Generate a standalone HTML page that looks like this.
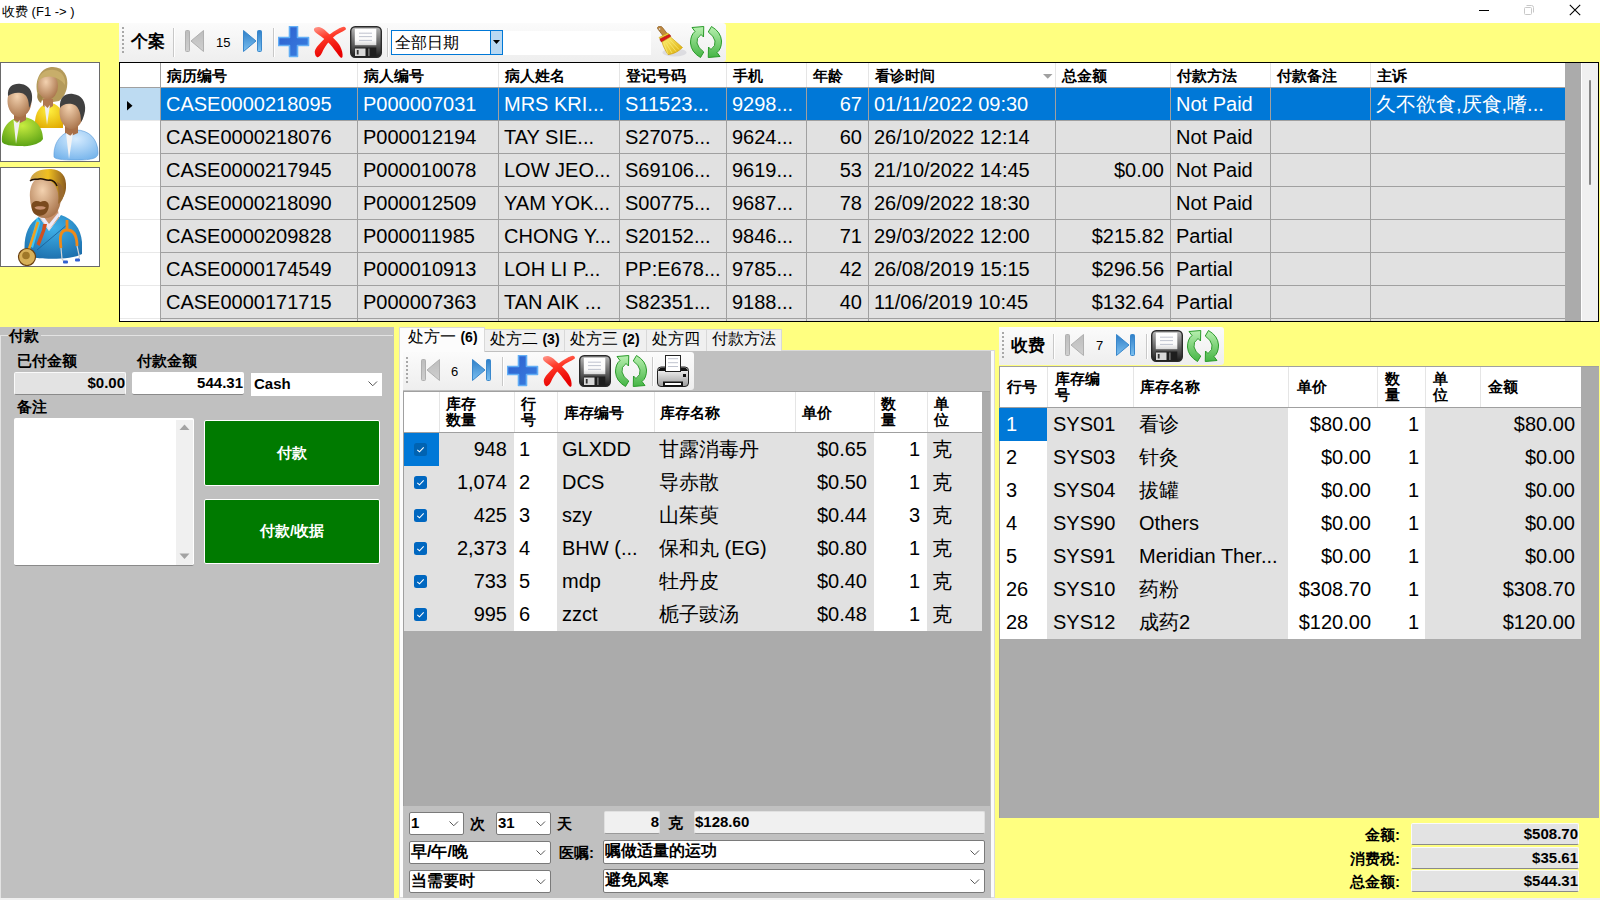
<!DOCTYPE html><html><head><meta charset="utf-8"><title>收费</title><style>
html,body{margin:0;padding:0}
body{width:1600px;height:900px;position:relative;overflow:hidden;background:#ffff80;font-family:'Liberation Sans', sans-serif;}
body div{position:absolute;box-sizing:border-box}
.t{white-space:nowrap;line-height:1}
.cell{white-space:nowrap;overflow:hidden;font-size:20px;line-height:33px;padding:0 5px;}
.r{text-align:right;padding-right:6px}
.hd{white-space:nowrap;font-size:15px;font-weight:bold;line-height:16px}
</style></head><body>

<svg width="0" height="0" style="position:absolute">
<defs>
<linearGradient id="gBlue" x1="0" y1="0" x2="0" y2="1"><stop offset="0" stop-color="#2f7fc8"/><stop offset="1" stop-color="#7cc0f0"/></linearGradient>
<linearGradient id="gGray" x1="0" y1="0" x2="0" y2="1"><stop offset="0" stop-color="#bdbdbd"/><stop offset="1" stop-color="#cfcfcf"/></linearGradient>
<linearGradient id="gPlus" x1="0" y1="0" x2="1" y2="1"><stop offset="0" stop-color="#2c5fce"/><stop offset="1" stop-color="#3a7fe0"/></linearGradient>
<linearGradient id="gRed" x1="0" y1="0" x2="0.3" y2="1"><stop offset="0" stop-color="#ff9c90"/><stop offset="0.4" stop-color="#ff3a28"/><stop offset="1" stop-color="#e80000"/></linearGradient>
<linearGradient id="gFlop" x1="0" y1="0" x2="0" y2="1"><stop offset="0" stop-color="#b8b8b8"/><stop offset="0.5" stop-color="#6a6a6a"/><stop offset="1" stop-color="#1a1a1a"/></linearGradient>
<linearGradient id="gLabel" x1="0" y1="0" x2="0" y2="1"><stop offset="0" stop-color="#ffffff"/><stop offset="0.7" stop-color="#fafafa"/><stop offset="1" stop-color="#d8d8d8"/></linearGradient>
<linearGradient id="gGreen" x1="0" y1="0" x2="0" y2="1"><stop offset="0" stop-color="#b8f0b0"/><stop offset="1" stop-color="#45b545"/></linearGradient>
<linearGradient id="gGreen2" x1="0" y1="0" x2="0" y2="1"><stop offset="0" stop-color="#45b545"/><stop offset="1" stop-color="#b8f0b0"/></linearGradient>
<linearGradient id="gTb" x1="0" y1="0" x2="0" y2="1"><stop offset="0" stop-color="#fbfbfb"/><stop offset="1" stop-color="#ececec"/></linearGradient>
<linearGradient id="gPrn" x1="0" y1="0" x2="0" y2="1"><stop offset="0" stop-color="#ffffff"/><stop offset="1" stop-color="#9a9a9a"/></linearGradient>
<linearGradient id="gBroom" x1="0" y1="0" x2="1" y2="1"><stop offset="0" stop-color="#fff27a"/><stop offset="1" stop-color="#d9a800"/></linearGradient>
<radialGradient id="gSkin" cx="0.4" cy="0.35" r="0.7"><stop offset="0" stop-color="#f3d2b0"/><stop offset="1" stop-color="#a8734a"/></radialGradient>
<radialGradient id="gGreenB" cx="0.5" cy="0.3" r="0.8"><stop offset="0" stop-color="#c8ec40"/><stop offset="1" stop-color="#4f9a10"/></radialGradient>
<radialGradient id="gYellowB" cx="0.5" cy="0.3" r="0.8"><stop offset="0" stop-color="#fff040"/><stop offset="1" stop-color="#e0a800"/></radialGradient>
<radialGradient id="gBlueB" cx="0.5" cy="0.3" r="0.8"><stop offset="0" stop-color="#d6ecff"/><stop offset="1" stop-color="#6fb0ea"/></radialGradient>
<radialGradient id="gCoat" cx="0.5" cy="0.3" r="0.8"><stop offset="0" stop-color="#3fb0e8"/><stop offset="1" stop-color="#1a6aa8"/></radialGradient>
<linearGradient id="gHair" x1="0" y1="0" x2="1" y2="0"><stop offset="0" stop-color="#c8a050"/><stop offset="0.5" stop-color="#f0c020"/><stop offset="1" stop-color="#8a5a20"/></linearGradient>
</defs></svg>

<div style="left:0px;top:0px;width:1600px;height:23px;background:#fff"></div>
<div class="t" style="left:2px;top:4px;font-size:13px;font-weight:normal;color:#000;line-height:15px">收费 (F1 -&gt; )</div>
<div style="left:1479px;top:10px;width:10px;height:1px;background:#000"></div>
<svg style="position:absolute;left:1523px;top:4px" width="12" height="12" viewBox="0 0 12 12"><rect x="1.5" y="3.5" width="7" height="7" rx="1" fill="none" stroke="#c8c8c8"/><path d="M3.5 1.5 h5 a2 2 0 0 1 2 2 v5" fill="none" stroke="#c8c8c8"/></svg>
<svg style="position:absolute;left:1569px;top:4px" width="12" height="12" viewBox="0 0 12 12"><path d="M0.8 0.8 L11.2 11.2 M11.2 0.8 L0.8 11.2" stroke="#000" stroke-width="1.1"/></svg>
<div style="left:0px;top:898px;width:1600px;height:2px;background:#f0f0f0"></div>
<div style="left:119px;top:23px;width:607px;height:39px;background:linear-gradient(#fbfbfb,#eeeeee);border-radius:0 3px 3px 0"></div>
<div style="left:122px;top:27px;width:2px;height:2px;background:#a8a8a8"></div><div style="left:122px;top:31px;width:2px;height:2px;background:#a8a8a8"></div><div style="left:122px;top:35px;width:2px;height:2px;background:#a8a8a8"></div><div style="left:122px;top:39px;width:2px;height:2px;background:#a8a8a8"></div><div style="left:122px;top:43px;width:2px;height:2px;background:#a8a8a8"></div><div style="left:122px;top:47px;width:2px;height:2px;background:#a8a8a8"></div><div style="left:122px;top:51px;width:2px;height:2px;background:#a8a8a8"></div>
<div class="t" style="left:131px;top:33px;font-size:17px;font-weight:bold;color:#000;line-height:17px">个案</div>
<div style="left:173px;top:28px;width:1px;height:29px;background:#c8c8c8;box-shadow:1px 0 0 #fff"></div>
<svg style="position:absolute;left:185px;top:30px" width="20" height="23" viewBox="0 0 20 23"><rect x="0.5" y="0.5" width="4" height="21" rx="1" fill="url(#gGray)" stroke="#b0b0b0"/><path d="M18.5 0.5 L18.5 21.5 L6 11 Z" fill="url(#gGray)" stroke="#b0b0b0" stroke-linejoin="round"/></svg>
<div class="t" style="left:216px;top:37px;font-size:13px;font-weight:normal;color:#000;line-height:12px">15</div>
<svg style="position:absolute;left:243px;top:30px" width="20" height="23" viewBox="0 0 20 23"><path d="M0.5 0.5 L0.5 21.5 L13 11 Z" fill="url(#gBlue)" stroke="#3a88cc" stroke-linejoin="round"/><rect x="14.5" y="0.5" width="4" height="21" rx="1" fill="url(#gBlue)" stroke="#3a88cc"/></svg>
<div style="left:273px;top:28px;width:1px;height:29px;background:#c8c8c8;box-shadow:1px 0 0 #fff"></div>
<svg style="position:absolute;left:278px;top:26px" width="32" height="32" viewBox="0 0 32 32"><path d="M11.5 0.5 h8 v11 h11 v8 h-11 v11 h-8 v-11 h-11 v-8 h11 z" fill="url(#gPlus)" stroke="#62aef6" stroke-width="1.6" stroke-linejoin="round"/></svg>
<svg style="position:absolute;left:313px;top:25px" width="34" height="34" viewBox="-1 0 34 34"><path d="M-0.1 4 C0.5 2 4 1.5 6 2.2 C9 3 12 6 15.4 9.2 C19 12.5 24 17 26 21 C28 25 29 29 28.5 31.7 C28 33 27 33 26.6 32.6 C25 31 21 25 16.3 19.5 C13 16 8 12 3.2 8.7 C1.5 7.5 -0.3 6 -0.1 4 Z" fill="url(#gRed)"/><path d="M31.3 2.6 C32 3.2 32 4 31.8 4.5 C28 7 25 8 22 10.1 C19 12.5 17 14.5 14.9 16.7 C12 20 10 23.5 8.8 26 C8 28 7 30 6 30.8 C5 32 4 32.5 3.2 32.2 C2 31.5 1.3 30.5 1.3 29.8 C0.8 28 0.7 27 0.85 26 C1.5 24 2.5 22 4.1 20.4 C6 18 8 16 10.2 13.9 C12.5 11.5 15 9.8 17.3 8.3 C20 6.5 23 4.5 25.7 3.1 C27 2.4 29 1.5 29.9 1.7 C30.5 1.8 31 2.2 31.3 2.6 Z" fill="url(#gRed)"/></svg>
<svg style="position:absolute;left:350px;top:26px" width="32" height="32" viewBox="0 0 32 32"><rect x="0.7" y="0.7" width="30.6" height="30.6" rx="4.5" fill="url(#gFlop)" stroke="#2a2a2a" stroke-width="1.4"/><rect x="4.8" y="2.7" width="21.5" height="16.5" fill="url(#gLabel)"/><path d="M9 7.2 h13 M9 10.6 h13 M9 14.4 h13" stroke="#b8bcc8" stroke-width="0.9"/><rect x="4.8" y="21.5" width="21.5" height="9" fill="#1e1e1e"/><rect x="5" y="22.5" width="10.5" height="7.5" fill="#d8d8d8"/><rect x="6.8" y="24" width="1.8" height="4.5" fill="#333"/><rect x="18.3" y="22.5" width="1.2" height="7.5" fill="#888"/></svg>
<div style="left:387px;top:28px;width:1px;height:29px;background:#c8c8c8;box-shadow:1px 0 0 #fff"></div>
<div style="left:391px;top:30px;width:112px;height:25px;background:#fff;border:1px solid #0078d7"></div>
<div style="left:490px;top:31px;width:12px;height:23px;background:#b8d8f2;border-left:1px solid #0078d7"></div>
<svg style="position:absolute;left:493px;top:40px" width="7" height="5" viewBox="0 0 7 5"><path d="M0 0 L7 0 L3.5 4 Z" fill="#000"/></svg>
<div class="t" style="left:395px;top:35px;font-size:16px;font-weight:normal;color:#000;line-height:16px">全部日期</div>
<div style="left:503px;top:31px;width:148px;height:24px;background:#fff"></div>
<svg style="position:absolute;left:656px;top:26px" width="32" height="32" viewBox="0 0 32 32"><ellipse cx="18.5" cy="26.5" rx="12" ry="4" fill="#c4c4cc" opacity="0.45"/><path d="M1.5 2.5 C1 0 5 -0.5 6.5 1.5 L11.5 8 L7.5 10.5 Z" fill="#c08a40" stroke="#8a5a20" stroke-width="0.7"/><circle cx="3.7" cy="3" r="1.1" fill="#fff" stroke="#8a5a20" stroke-width="0.5"/><path d="M3 11.5 L12 7 L13 8.5 L4 13 Z" fill="#f0d040" stroke="#c8a000" stroke-width="0.5"/><path d="M4 13 L13 8.5 C14.5 8.5 15 10.5 14.5 11 L6 16 C5 16 4 14.5 4 13 Z" fill="#d81818" stroke="#901010" stroke-width="0.5"/><path d="M6 16 L14.5 11 L26.5 21.5 C22 26 16 28.5 12 28.5 C9 24 7 20 6 16 Z" fill="url(#gBroom)" stroke="#c89800" stroke-width="0.6"/><path d="M8 18 L12 28 M10 17 L16 27 M12 15.5 L20 25.5 M14 14 L23 23.5" stroke="#f8e870" stroke-width="0.8"/></svg>
<svg style="position:absolute;left:690px;top:26px" width="32" height="32" viewBox="0 0 32 32"><path d="M2 1.5 L13.75 0.5 L13.5 11 L11 8.5 Q6 12 7 17 Q8 22 13.75 26 L10.5 31.5 Q1 26 0.5 17 Q0.5 9 5 5.5 Z" fill="url(#gGreen)" stroke="#2a9a2a" stroke-width="1" stroke-linejoin="round"/><path d="M2 1.5 L13.75 0.5 L13.5 11 L11 8.5 Q6 12 7 17 Q8 22 13.75 26 L10.5 31.5 Q1 26 0.5 17 Q0.5 9 5 5.5 Z" transform="rotate(180 16 16)" fill="url(#gGreen2)" stroke="#2a9a2a" stroke-width="1" stroke-linejoin="round"/></svg>
<div style="left:0px;top:62px;width:100px;height:100px;background:#fff;border:1px solid #6a6a6a"></div>
<div style="left:0px;top:167px;width:100px;height:100px;background:#fff;border:1px solid #6a6a6a"></div>
<svg style="position:absolute;left:1px;top:63px" width="98" height="98" viewBox="0 0 98 98">
<g>
 <path d="M39 36 C33 28 34 8 48 4.5 C61 2 68 12 66 24 C65 30 62 35 58 38 L46 40 Z" fill="#b49a5a"/>
 <path d="M37 30 C35 34 37 38 40 40 L42 34 Z" fill="#a08448"/>
 <path d="M34 63 C33 49 40 41 48 40 C56 40 62 46 62 56 L62 65 L36 65 Z" fill="url(#gYellowB)"/>
 <path d="M42 36 L52 36 L52 43 L47 46 L42 43 Z" fill="#b07850"/>
 <path d="M43.5 42 L46 62 L49 42 L46.5 45 Z" fill="#f0f0f0"/>
 <ellipse cx="47" cy="23" rx="10" ry="13.5" fill="url(#gSkin)"/>
 <path d="M37 20 C37 10 46 6 53 7 C61 8 65 14 64 22 C60 16 52 12 44 14 C40 15 38 17 37 20 Z" fill="#c8ae6a"/>
</g>
<g>
 <path d="M1 79 C0 64 9 55 20 54 C32 54 42 62 42 76 C40 80 30 84 20 83 C10 83 3 82 1 79 Z" fill="url(#gGreenB)"/>
 <path d="M13 48 L25 48 L25 57 L19 60 L13 57 Z" fill="#a87048"/>
 <path d="M12.5 57 L15 81 L19 57 L16 60 Z" fill="#f0f0f0"/>
 <ellipse cx="18.5" cy="38" rx="12" ry="16" fill="url(#gSkin)"/>
 <path d="M7 33 C6 23 13 20 20 21 C28 22 32 28 31 37 C30 41 29 43 28 45 C28 37 26 31 20 30 C14 29 10 31 7 33 Z" fill="#404040"/>
</g>
<g>
 <path d="M53 94 C52 78 62 68 75 67 C88 67 97 76 97 90 C97 95 92 97 75 97 C60 97 54 96 53 94 Z" fill="url(#gBlueB)" stroke="#5a9ad8" stroke-width="0.6"/>
 <path d="M64 60 L77 60 L77 70 L70 73 L64 70 Z" fill="#a87048"/>
 <path d="M65 70 L68 96 L72 70 L69 73 Z" fill="#f4f4f4"/>
 <ellipse cx="70.5" cy="49" rx="12" ry="17" fill="url(#gSkin)"/>
 <path d="M59 45 C58 34 65 30 72 31 C81 32 85 39 84 48 C83 53 82 56 80 59 C80 49 77 42 71 41 C65 40 61 42 59 45 Z" fill="#404040"/>
</g></svg>
<svg style="position:absolute;left:1px;top:168px" width="98" height="98" viewBox="0 0 98 98">
 <path d="M24 88 C22 70 26 56 38 49 L48 63 L60 47 C72 51 80 60 81 74 L81 86 C70 92 40 92 24 88 Z" fill="url(#gCoat)"/>
 <path d="M67 56 L36 82" stroke="#1a5a90" stroke-width="0.8"/>
 <path d="M36 49 L39.5 54 L32 80 L28.5 78 Z" fill="#40d0ff" opacity="0.85"/>
 <path d="M38 44 L57 42 L58 50 L48 62 L39 50 Z" fill="#c8906a"/>
 <path d="M38 48 L48 62 L59 47 L57 45 L48 56 L40 45 Z" fill="#eceaf8"/>
 <path d="M42 56 L46 56 L44.5 62 L38.5 78 L35.5 76 L41 62 Z" fill="#d05020"/>
 <path d="M29 30 C28 14 36 7 46 7.5 C56 8 61 16 60 30 C59.5 42 54 50 44 50 C34 50 29.5 42 29 30 Z" fill="url(#gSkin)"/>
 <path d="M29 13 C30 4 40 0.5 50 1 C60 1.5 66 8 65 20 C64.5 26 62 31 58 34 C58 26 56 19 52 15 C46 10 38 11 29 13 Z" fill="url(#gHair)"/>
 <path d="M56 14 C62 16 64 24 62 30 C61 33 59 35 57 36 C58 28 58 20 56 14 Z" fill="#9a6a30"/>
 <path d="M29 13 C32 10 35 12 38 11 C42 10 45 13 49 12 C52 12 55 15 56 18" fill="none" stroke="#201008" stroke-width="1.5"/>
 <path d="M30.5 38 C30.5 33 36 32 39.5 34 C43 32 48 33 47.8 38 C47.5 44 43.5 47.8 39 47.8 C34 47.8 30.5 44 30.5 38 Z" fill="#7a4a1e"/>
 <path d="M33.5 39.5 C35 37.8 43 37.8 44.8 39.5 C43.5 42.5 35 42.5 33.5 39.5 Z" fill="#c89070"/>
 <path d="M66 52 L66 62 M66 62 C58 62 59 72 60 80 M66 62 C74 62 76 70 76 78" fill="none" stroke="#f08a18" stroke-width="2.8"/>
 <path d="M60 80 L61 91 L63.5 94 M76 78 L78.5 89 L76.5 92" fill="none" stroke="#d4d4d4" stroke-width="1.2"/>
 <rect x="62" y="92.5" width="5" height="3" rx="1" fill="#3060d0"/><rect x="74" y="90.5" width="5" height="3" rx="1" fill="#3060d0"/>
 <path d="M37 54 L28 81" stroke="#f0a020" stroke-width="2.5"/>
 <circle cx="26" cy="89" r="8.5" fill="#d8b058" stroke="#6a4010" stroke-width="1.2"/>
 <circle cx="25" cy="87.5" r="3.8" fill="#a07828"/>
</svg>
<div style="left:119px;top:62px;width:1480px;height:260px;background:#ababab;border:1px solid #000"></div>
<div style="left:120px;top:63px;width:1445px;height:24px;background:#fff"></div>
<div style="left:120px;top:87px;width:1445px;height:1px;background:#a0a0a0"></div>
<div style="left:160px;top:63px;width:1px;height:24px;background:#a0a0a0"></div>
<div style="left:357px;top:63px;width:1px;height:24px;background:#e5e5e5"></div>
<div style="left:498px;top:63px;width:1px;height:24px;background:#e5e5e5"></div>
<div style="left:619px;top:63px;width:1px;height:24px;background:#e5e5e5"></div>
<div style="left:726px;top:63px;width:1px;height:24px;background:#e5e5e5"></div>
<div style="left:806px;top:63px;width:1px;height:24px;background:#e5e5e5"></div>
<div style="left:868px;top:63px;width:1px;height:24px;background:#e5e5e5"></div>
<div style="left:1055px;top:63px;width:1px;height:24px;background:#e5e5e5"></div>
<div style="left:1170px;top:63px;width:1px;height:24px;background:#e5e5e5"></div>
<div style="left:1270px;top:63px;width:1px;height:24px;background:#e5e5e5"></div>
<div style="left:1370px;top:63px;width:1px;height:24px;background:#e5e5e5"></div>
<div class="hd" style="left:167px;top:68px">病历编号</div>
<div class="hd" style="left:364px;top:68px">病人编号</div>
<div class="hd" style="left:505px;top:68px">病人姓名</div>
<div class="hd" style="left:626px;top:68px">登记号码</div>
<div class="hd" style="left:733px;top:68px">手机</div>
<div class="hd" style="left:813px;top:68px">年龄</div>
<div class="hd" style="left:875px;top:68px">看诊时间</div>
<div class="hd" style="left:1062px;top:68px">总金额</div>
<div class="hd" style="left:1177px;top:68px">付款方法</div>
<div class="hd" style="left:1277px;top:68px">付款备注</div>
<div class="hd" style="left:1377px;top:68px">主诉</div>
<svg style="position:absolute;left:1043px;top:74px" width="10" height="5" viewBox="0 0 10 5"><path d="M0 0 L9.5 0 L4.75 4.8 Z" fill="#a0a0a0"/></svg>
<div style="left:120px;top:88px;width:40px;height:233px;background:#fff"></div>
<div style="left:161px;top:88px;width:1404px;height:233px;background:#e1e1e1"></div>
<div style="left:161px;top:120px;width:1404px;height:1px;background:#a0a0a0"></div>
<div style="left:120px;top:120px;width:40px;height:1px;background:#e8e8e8"></div>
<div style="left:161px;top:153px;width:1404px;height:1px;background:#a0a0a0"></div>
<div style="left:120px;top:153px;width:40px;height:1px;background:#e8e8e8"></div>
<div style="left:161px;top:186px;width:1404px;height:1px;background:#a0a0a0"></div>
<div style="left:120px;top:186px;width:40px;height:1px;background:#e8e8e8"></div>
<div style="left:161px;top:219px;width:1404px;height:1px;background:#a0a0a0"></div>
<div style="left:120px;top:219px;width:40px;height:1px;background:#e8e8e8"></div>
<div style="left:161px;top:252px;width:1404px;height:1px;background:#a0a0a0"></div>
<div style="left:120px;top:252px;width:40px;height:1px;background:#e8e8e8"></div>
<div style="left:161px;top:285px;width:1404px;height:1px;background:#a0a0a0"></div>
<div style="left:120px;top:285px;width:40px;height:1px;background:#e8e8e8"></div>
<div style="left:161px;top:318px;width:1404px;height:1px;background:#a0a0a0"></div>
<div style="left:120px;top:318px;width:40px;height:1px;background:#e8e8e8"></div>
<div style="left:160px;top:88px;width:1px;height:233px;background:#a0a0a0"></div>
<div style="left:357px;top:88px;width:1px;height:233px;background:#a0a0a0"></div>
<div style="left:498px;top:88px;width:1px;height:233px;background:#a0a0a0"></div>
<div style="left:619px;top:88px;width:1px;height:233px;background:#a0a0a0"></div>
<div style="left:726px;top:88px;width:1px;height:233px;background:#a0a0a0"></div>
<div style="left:806px;top:88px;width:1px;height:233px;background:#a0a0a0"></div>
<div style="left:868px;top:88px;width:1px;height:233px;background:#a0a0a0"></div>
<div style="left:1055px;top:88px;width:1px;height:233px;background:#a0a0a0"></div>
<div style="left:1170px;top:88px;width:1px;height:233px;background:#a0a0a0"></div>
<div style="left:1270px;top:88px;width:1px;height:233px;background:#a0a0a0"></div>
<div style="left:1370px;top:88px;width:1px;height:233px;background:#a0a0a0"></div>
<div style="left:120px;top:88px;width:40px;height:32px;background:#bddbf2"></div>
<div style="left:161px;top:88px;width:1404px;height:32px;background:#0078d7"></div>
<div style="left:357px;top:88px;width:1px;height:32px;background:#a0a0a0"></div>
<div style="left:498px;top:88px;width:1px;height:32px;background:#a0a0a0"></div>
<div style="left:619px;top:88px;width:1px;height:32px;background:#a0a0a0"></div>
<div style="left:726px;top:88px;width:1px;height:32px;background:#a0a0a0"></div>
<div style="left:806px;top:88px;width:1px;height:32px;background:#a0a0a0"></div>
<div style="left:868px;top:88px;width:1px;height:32px;background:#a0a0a0"></div>
<div style="left:1055px;top:88px;width:1px;height:32px;background:#a0a0a0"></div>
<div style="left:1170px;top:88px;width:1px;height:32px;background:#a0a0a0"></div>
<div style="left:1270px;top:88px;width:1px;height:32px;background:#a0a0a0"></div>
<div style="left:1370px;top:88px;width:1px;height:32px;background:#a0a0a0"></div>
<svg style="position:absolute;left:127px;top:101px" width="6" height="10" viewBox="0 0 6 10"><path d="M0 0 L5.5 4.75 L0 9.5 Z" fill="#000"/></svg>
<div class="cell" style="left:161px;top:88px;width:196px;height:32px;color:#fff">CASE0000218095</div>
<div class="cell" style="left:358px;top:88px;width:140px;height:32px;color:#fff">P000007031</div>
<div class="cell" style="left:499px;top:88px;width:120px;height:32px;color:#fff">MRS KRI...</div>
<div class="cell" style="left:620px;top:88px;width:106px;height:32px;color:#fff">S11523...</div>
<div class="cell" style="left:727px;top:88px;width:79px;height:32px;color:#fff">9298...</div>
<div class="cell r" style="left:807px;top:88px;width:61px;height:32px;color:#fff">67</div>
<div class="cell" style="left:869px;top:88px;width:186px;height:32px;color:#fff">01/11/2022 09:30</div>
<div class="cell" style="left:1171px;top:88px;width:99px;height:32px;color:#fff">Not Paid</div>
<div class="cell" style="left:1371px;top:88px;width:194px;height:32px;color:#fff">久不欲食,厌食,嗜...</div>
<div class="cell" style="left:161px;top:121px;width:196px;height:32px;color:#000">CASE0000218076</div>
<div class="cell" style="left:358px;top:121px;width:140px;height:32px;color:#000">P000012194</div>
<div class="cell" style="left:499px;top:121px;width:120px;height:32px;color:#000">TAY SIE...</div>
<div class="cell" style="left:620px;top:121px;width:106px;height:32px;color:#000">S27075...</div>
<div class="cell" style="left:727px;top:121px;width:79px;height:32px;color:#000">9624...</div>
<div class="cell r" style="left:807px;top:121px;width:61px;height:32px;color:#000">60</div>
<div class="cell" style="left:869px;top:121px;width:186px;height:32px;color:#000">26/10/2022 12:14</div>
<div class="cell" style="left:1171px;top:121px;width:99px;height:32px;color:#000">Not Paid</div>
<div class="cell" style="left:161px;top:154px;width:196px;height:32px;color:#000">CASE0000217945</div>
<div class="cell" style="left:358px;top:154px;width:140px;height:32px;color:#000">P000010078</div>
<div class="cell" style="left:499px;top:154px;width:120px;height:32px;color:#000">LOW JEO...</div>
<div class="cell" style="left:620px;top:154px;width:106px;height:32px;color:#000">S69106...</div>
<div class="cell" style="left:727px;top:154px;width:79px;height:32px;color:#000">9619...</div>
<div class="cell r" style="left:807px;top:154px;width:61px;height:32px;color:#000">53</div>
<div class="cell" style="left:869px;top:154px;width:186px;height:32px;color:#000">21/10/2022 14:45</div>
<div class="cell r" style="left:1056px;top:154px;width:114px;height:32px;color:#000">$0.00</div>
<div class="cell" style="left:1171px;top:154px;width:99px;height:32px;color:#000">Not Paid</div>
<div class="cell" style="left:161px;top:187px;width:196px;height:32px;color:#000">CASE0000218090</div>
<div class="cell" style="left:358px;top:187px;width:140px;height:32px;color:#000">P000012509</div>
<div class="cell" style="left:499px;top:187px;width:120px;height:32px;color:#000">YAM YOK...</div>
<div class="cell" style="left:620px;top:187px;width:106px;height:32px;color:#000">S00775...</div>
<div class="cell" style="left:727px;top:187px;width:79px;height:32px;color:#000">9687...</div>
<div class="cell r" style="left:807px;top:187px;width:61px;height:32px;color:#000">78</div>
<div class="cell" style="left:869px;top:187px;width:186px;height:32px;color:#000">26/09/2022 18:30</div>
<div class="cell" style="left:1171px;top:187px;width:99px;height:32px;color:#000">Not Paid</div>
<div class="cell" style="left:161px;top:220px;width:196px;height:32px;color:#000">CASE0000209828</div>
<div class="cell" style="left:358px;top:220px;width:140px;height:32px;color:#000">P000011985</div>
<div class="cell" style="left:499px;top:220px;width:120px;height:32px;color:#000">CHONG Y...</div>
<div class="cell" style="left:620px;top:220px;width:106px;height:32px;color:#000">S20152...</div>
<div class="cell" style="left:727px;top:220px;width:79px;height:32px;color:#000">9846...</div>
<div class="cell r" style="left:807px;top:220px;width:61px;height:32px;color:#000">71</div>
<div class="cell" style="left:869px;top:220px;width:186px;height:32px;color:#000">29/03/2022 12:00</div>
<div class="cell r" style="left:1056px;top:220px;width:114px;height:32px;color:#000">$215.82</div>
<div class="cell" style="left:1171px;top:220px;width:99px;height:32px;color:#000">Partial</div>
<div class="cell" style="left:161px;top:253px;width:196px;height:32px;color:#000">CASE0000174549</div>
<div class="cell" style="left:358px;top:253px;width:140px;height:32px;color:#000">P000010913</div>
<div class="cell" style="left:499px;top:253px;width:120px;height:32px;color:#000">LOH LI P...</div>
<div class="cell" style="left:620px;top:253px;width:106px;height:32px;color:#000">PP:E678...</div>
<div class="cell" style="left:727px;top:253px;width:79px;height:32px;color:#000">9785...</div>
<div class="cell r" style="left:807px;top:253px;width:61px;height:32px;color:#000">42</div>
<div class="cell" style="left:869px;top:253px;width:186px;height:32px;color:#000">26/08/2019 15:15</div>
<div class="cell r" style="left:1056px;top:253px;width:114px;height:32px;color:#000">$296.56</div>
<div class="cell" style="left:1171px;top:253px;width:99px;height:32px;color:#000">Partial</div>
<div class="cell" style="left:161px;top:286px;width:196px;height:32px;color:#000">CASE0000171715</div>
<div class="cell" style="left:358px;top:286px;width:140px;height:32px;color:#000">P000007363</div>
<div class="cell" style="left:499px;top:286px;width:120px;height:32px;color:#000">TAN AIK ...</div>
<div class="cell" style="left:620px;top:286px;width:106px;height:32px;color:#000">S82351...</div>
<div class="cell" style="left:727px;top:286px;width:79px;height:32px;color:#000">9188...</div>
<div class="cell r" style="left:807px;top:286px;width:61px;height:32px;color:#000">40</div>
<div class="cell" style="left:869px;top:286px;width:186px;height:32px;color:#000">11/06/2019 10:45</div>
<div class="cell r" style="left:1056px;top:286px;width:114px;height:32px;color:#000">$132.64</div>
<div class="cell" style="left:1171px;top:286px;width:99px;height:32px;color:#000">Partial</div>
<div style="left:1581px;top:63px;width:17px;height:258px;background:#f0f0f0"></div>
<div style="left:1589px;top:80px;width:2px;height:105px;background:#858585;border-radius:1px"></div>
<div style="left:1581px;top:63px;width:1px;height:258px;background:#fff"></div>
<div style="left:0px;top:327px;width:394px;height:571px;background:#c0c0c0"></div>
<div style="left:0px;top:335px;width:8px;height:1px;background:#e3e3e3"></div>
<div style="left:41px;top:335px;width:352px;height:1px;background:#e3e3e3"></div>
<div style="left:0px;top:335px;width:1px;height:563px;background:#e3e3e3"></div>
<div class="hd" style="left:9px;top:328px">付款</div>
<div class="hd" style="left:17px;top:353px">已付金额</div>
<div class="hd" style="left:137px;top:353px">付款金额</div>
<div style="left:14px;top:372px;width:112px;height:23px;background:#e3e3e3;border:1px solid #fafafa;border-bottom:1px solid #8a8a8a;border-radius:2px"></div>
<div class="t" style="left:14px;top:375px;width:111px;text-align:right;font-size:15px;font-weight:bold;line-height:16px">$0.00</div>
<div style="left:132px;top:372px;width:112px;height:23px;background:#fff;border-bottom:1px solid #8a8a8a;border-radius:2px"></div>
<div class="t" style="left:132px;top:375px;width:111px;text-align:right;font-size:15px;font-weight:bold;line-height:16px">544.31</div>
<div style="left:251px;top:373px;width:131px;height:23px;background:#fff"></div>
<div class="t" style="left:254px;top:376px;font-size:15px;font-weight:bold;line-height:16px">Cash</div>
<svg style="position:absolute;left:368px;top:381px" width="10" height="6" viewBox="0 0 10 6"><path d="M0.5 0.5 L4.75 4.75 L9 0.5" fill="none" stroke="#555" stroke-width="1"/></svg>
<div class="hd" style="left:17px;top:399px">备注</div>
<div style="left:14px;top:418px;width:180px;height:148px;background:#fff;border-bottom:1px solid #8a8a8a;border-radius:2px"></div>
<div style="left:176px;top:420px;width:17px;height:145px;background:#f0f0f0"></div>
<svg style="position:absolute;left:179px;top:424px" width="11" height="7" viewBox="0 0 11 7"><path d="M0.5 6 L5.5 0.5 L10.5 6 Z" fill="#a3a3a3"/></svg>
<svg style="position:absolute;left:179px;top:553px" width="11" height="7" viewBox="0 0 11 7"><path d="M0.5 0.5 L5.5 6 L10.5 0.5 Z" fill="#a3a3a3"/></svg>
<div style="left:204px;top:420px;width:176px;height:66px;background:#007a00;border:1.5px solid #fff;border-radius:2px"></div>
<div class="t" style="left:204px;top:445px;width:176px;text-align:center;font-size:15px;font-weight:bold;color:#fff;line-height:16px">付款</div>
<div style="left:204px;top:499px;width:176px;height:65px;background:#007a00;border:1.5px solid #fff;border-radius:2px"></div>
<div class="t" style="left:204px;top:523px;width:176px;text-align:center;font-size:15px;font-weight:bold;color:#fff;line-height:16px">付款/收据</div>
<div style="left:399px;top:350px;width:596px;height:548px;background:#fcfcfc;border:1px solid #dadada"></div>
<div style="left:403px;top:351px;width:588px;height:547px;background:#c0c0c0"></div>
<div style="left:484px;top:329px;width:81px;height:22px;background:#f0f0f0;border:1px solid #d9d9d9;border-bottom:none"></div>
<div class="hd" style="left:490px;top:331px;font-weight:normal;font-size:16px">处方二 <b style='font-size:14px'>(3)</b></div>
<div style="left:564px;top:329px;width:83px;height:22px;background:#f0f0f0;border:1px solid #d9d9d9;border-bottom:none"></div>
<div class="hd" style="left:570px;top:331px;font-weight:normal;font-size:16px">处方三 <b style='font-size:14px'>(2)</b></div>
<div style="left:646px;top:329px;width:61px;height:22px;background:#f0f0f0;border:1px solid #d9d9d9;border-bottom:none"></div>
<div class="hd" style="left:652px;top:331px;font-weight:normal;font-size:16px">处方四</div>
<div style="left:706px;top:329px;width:76px;height:22px;background:#f0f0f0;border:1px solid #d9d9d9;border-bottom:none"></div>
<div class="hd" style="left:712px;top:331px;font-weight:normal;font-size:16px">付款方法</div>
<div style="left:399px;top:327px;width:86px;height:25px;background:#fcfcfc;border:1px solid #d9d9d9;border-bottom:none"></div>
<div class="hd" style="left:408px;top:329px;font-weight:normal;font-size:16px">处方一 <b style="font-size:14px">(6)</b></div>
<div style="left:403px;top:352px;width:291px;height:38px;background:linear-gradient(#fbfbfb,#eeeeee);border-radius:0 3px 3px 0"></div>
<div style="left:406px;top:357px;width:2px;height:2px;background:#a8a8a8"></div><div style="left:406px;top:361px;width:2px;height:2px;background:#a8a8a8"></div><div style="left:406px;top:365px;width:2px;height:2px;background:#a8a8a8"></div><div style="left:406px;top:369px;width:2px;height:2px;background:#a8a8a8"></div><div style="left:406px;top:373px;width:2px;height:2px;background:#a8a8a8"></div><div style="left:406px;top:377px;width:2px;height:2px;background:#a8a8a8"></div><div style="left:406px;top:381px;width:2px;height:2px;background:#a8a8a8"></div>
<svg style="position:absolute;left:421px;top:359px" width="20" height="23" viewBox="0 0 20 23"><rect x="0.5" y="0.5" width="4" height="21" rx="1" fill="url(#gGray)" stroke="#b0b0b0"/><path d="M18.5 0.5 L18.5 21.5 L6 11 Z" fill="url(#gGray)" stroke="#b0b0b0" stroke-linejoin="round"/></svg>
<div class="t" style="left:451px;top:366px;font-size:13px;font-weight:normal;color:#000;line-height:12px">6</div>
<svg style="position:absolute;left:472px;top:359px" width="20" height="23" viewBox="0 0 20 23"><path d="M0.5 0.5 L0.5 21.5 L13 11 Z" fill="url(#gBlue)" stroke="#3a88cc" stroke-linejoin="round"/><rect x="14.5" y="0.5" width="4" height="21" rx="1" fill="url(#gBlue)" stroke="#3a88cc"/></svg>
<div style="left:502px;top:357px;width:1px;height:29px;background:#c8c8c8;box-shadow:1px 0 0 #fff"></div>
<svg style="position:absolute;left:507px;top:355px" width="32" height="32" viewBox="0 0 32 32"><path d="M11.5 0.5 h8 v11 h11 v8 h-11 v11 h-8 v-11 h-11 v-8 h11 z" fill="url(#gPlus)" stroke="#62aef6" stroke-width="1.6" stroke-linejoin="round"/></svg>
<svg style="position:absolute;left:542px;top:354px" width="34" height="34" viewBox="-1 0 34 34"><path d="M-0.1 4 C0.5 2 4 1.5 6 2.2 C9 3 12 6 15.4 9.2 C19 12.5 24 17 26 21 C28 25 29 29 28.5 31.7 C28 33 27 33 26.6 32.6 C25 31 21 25 16.3 19.5 C13 16 8 12 3.2 8.7 C1.5 7.5 -0.3 6 -0.1 4 Z" fill="url(#gRed)"/><path d="M31.3 2.6 C32 3.2 32 4 31.8 4.5 C28 7 25 8 22 10.1 C19 12.5 17 14.5 14.9 16.7 C12 20 10 23.5 8.8 26 C8 28 7 30 6 30.8 C5 32 4 32.5 3.2 32.2 C2 31.5 1.3 30.5 1.3 29.8 C0.8 28 0.7 27 0.85 26 C1.5 24 2.5 22 4.1 20.4 C6 18 8 16 10.2 13.9 C12.5 11.5 15 9.8 17.3 8.3 C20 6.5 23 4.5 25.7 3.1 C27 2.4 29 1.5 29.9 1.7 C30.5 1.8 31 2.2 31.3 2.6 Z" fill="url(#gRed)"/></svg>
<svg style="position:absolute;left:579px;top:355px" width="32" height="32" viewBox="0 0 32 32"><rect x="0.7" y="0.7" width="30.6" height="30.6" rx="4.5" fill="url(#gFlop)" stroke="#2a2a2a" stroke-width="1.4"/><rect x="4.8" y="2.7" width="21.5" height="16.5" fill="url(#gLabel)"/><path d="M9 7.2 h13 M9 10.6 h13 M9 14.4 h13" stroke="#b8bcc8" stroke-width="0.9"/><rect x="4.8" y="21.5" width="21.5" height="9" fill="#1e1e1e"/><rect x="5" y="22.5" width="10.5" height="7.5" fill="#d8d8d8"/><rect x="6.8" y="24" width="1.8" height="4.5" fill="#333"/><rect x="18.3" y="22.5" width="1.2" height="7.5" fill="#888"/></svg>
<svg style="position:absolute;left:615px;top:355px" width="32" height="32" viewBox="0 0 32 32"><path d="M2 1.5 L13.75 0.5 L13.5 11 L11 8.5 Q6 12 7 17 Q8 22 13.75 26 L10.5 31.5 Q1 26 0.5 17 Q0.5 9 5 5.5 Z" fill="url(#gGreen)" stroke="#2a9a2a" stroke-width="1" stroke-linejoin="round"/><path d="M2 1.5 L13.75 0.5 L13.5 11 L11 8.5 Q6 12 7 17 Q8 22 13.75 26 L10.5 31.5 Q1 26 0.5 17 Q0.5 9 5 5.5 Z" transform="rotate(180 16 16)" fill="url(#gGreen2)" stroke="#2a9a2a" stroke-width="1" stroke-linejoin="round"/></svg>
<div style="left:652px;top:357px;width:1px;height:29px;background:#c8c8c8;box-shadow:1px 0 0 #fff"></div>
<svg style="position:absolute;left:657px;top:355px" width="32" height="32" viewBox="0 0 32 32"><rect x="8.5" y="0.5" width="15" height="16" fill="#fff" stroke="#222"/><path d="M11 3.7 h10 M11 7.7 h10 M11 11.5 h10" stroke="#b8bcc8" stroke-width="0.9"/><path d="M4 12 h24 a3.5 3.5 0 0 1 3.5 3.5 v12.5 a3.5 3.5 0 0 1 -3.5 3.5 h-24 a3.5 3.5 0 0 1 -3.5 -3.5 v-12.5 a3.5 3.5 0 0 1 3.5 -3.5 z" fill="url(#gPrn)" stroke="#222" stroke-width="1"/><path d="M1 16 Q2 12.5 5 12.5 h22 Q30 12.5 31 16 Z" fill="#111"/><rect x="8.5" y="0.5" width="15" height="16" fill="#fff" stroke="#222"/><path d="M11 3.7 h10 M11 7.7 h10 M11 11.5 h10" stroke="#b8bcc8" stroke-width="0.9"/><rect x="6" y="26.5" width="20" height="5" fill="#111"/><rect x="8" y="28" width="16" height="2" fill="#fff"/><rect x="26" y="19" width="3" height="3" fill="#111"/></svg>
<div style="left:403px;top:391px;width:587px;height:415px;background:#ababab;border-top:1px solid #a0a0a0;border-left:1px solid #a0a0a0"></div>
<div style="left:404px;top:392px;width:578px;height:40px;background:#fff"></div>
<div style="left:404px;top:432px;width:578px;height:1px;background:#a0a0a0"></div>
<div style="left:439px;top:392px;width:1px;height:40px;background:#e5e5e5"></div>
<div style="left:514px;top:392px;width:1px;height:40px;background:#e5e5e5"></div>
<div style="left:557px;top:392px;width:1px;height:40px;background:#e5e5e5"></div>
<div style="left:654px;top:392px;width:1px;height:40px;background:#e5e5e5"></div>
<div style="left:795px;top:392px;width:1px;height:40px;background:#e5e5e5"></div>
<div style="left:874px;top:392px;width:1px;height:40px;background:#e5e5e5"></div>
<div style="left:927px;top:392px;width:1px;height:40px;background:#e5e5e5"></div>
<div class="hd" style="left:446px;top:396px;line-height:16px">库存<br>数量</div>
<div class="hd" style="left:521px;top:396px;line-height:16px">行<br>号</div>
<div class="hd" style="left:564px;top:405px;line-height:16px">库存编号</div>
<div class="hd" style="left:660px;top:405px;line-height:16px">库存名称</div>
<div class="hd" style="left:802px;top:405px;line-height:16px">单价</div>
<div class="hd" style="left:881px;top:396px;line-height:16px">数<br>量</div>
<div class="hd" style="left:934px;top:396px;line-height:16px">单<br>位</div>
<div style="left:404px;top:433px;width:35px;height:198px;background:#e1e1e1"></div>
<div style="left:439px;top:433px;width:75px;height:198px;background:#e1e1e1"></div>
<div style="left:514px;top:433px;width:43px;height:198px;background:#fff"></div>
<div style="left:557px;top:433px;width:97px;height:198px;background:#e1e1e1"></div>
<div style="left:654px;top:433px;width:141px;height:198px;background:#e1e1e1"></div>
<div style="left:795px;top:433px;width:79px;height:198px;background:#e1e1e1"></div>
<div style="left:874px;top:433px;width:53px;height:198px;background:#fff"></div>
<div style="left:927px;top:433px;width:55px;height:198px;background:#e1e1e1"></div>
<div style="left:404px;top:433px;width:35px;height:33px;background:#0078d7"></div>
<svg style="position:absolute;left:414px;top:443px" width="13" height="13" viewBox="0 0 13 13"><rect x="0" y="0" width="13" height="13" rx="2.5" fill="#0063b1"/><path d="M3.3 6.8 L5.5 8.8 L9.7 4.3" fill="none" stroke="#fff" stroke-width="1.1"/></svg>
<div class="cell" style="left:439px;top:433px;width:75px;height:33px;text-align:right;padding-right:7px">948</div>
<div class="cell" style="left:514px;top:433px;width:43px;height:33px;padding-left:5px">1</div>
<div class="cell" style="left:557px;top:433px;width:97px;height:33px;padding-left:5px">GLXDD</div>
<div class="cell" style="left:654px;top:433px;width:141px;height:33px;padding-left:5px">甘露消毒丹</div>
<div class="cell" style="left:795px;top:433px;width:79px;height:33px;text-align:right;padding-right:7px">$0.65</div>
<div class="cell" style="left:874px;top:433px;width:53px;height:33px;text-align:right;padding-right:7px">1</div>
<div class="cell" style="left:927px;top:433px;width:55px;height:33px;padding-left:5px">克</div>
<svg style="position:absolute;left:414px;top:476px" width="13" height="13" viewBox="0 0 13 13"><rect x="0" y="0" width="13" height="13" rx="2.5" fill="#0067c0"/><path d="M3.3 6.8 L5.5 8.8 L9.7 4.3" fill="none" stroke="#fff" stroke-width="1.1"/></svg>
<div class="cell" style="left:439px;top:466px;width:75px;height:33px;text-align:right;padding-right:7px">1,074</div>
<div class="cell" style="left:514px;top:466px;width:43px;height:33px;padding-left:5px">2</div>
<div class="cell" style="left:557px;top:466px;width:97px;height:33px;padding-left:5px">DCS</div>
<div class="cell" style="left:654px;top:466px;width:141px;height:33px;padding-left:5px">导赤散</div>
<div class="cell" style="left:795px;top:466px;width:79px;height:33px;text-align:right;padding-right:7px">$0.50</div>
<div class="cell" style="left:874px;top:466px;width:53px;height:33px;text-align:right;padding-right:7px">1</div>
<div class="cell" style="left:927px;top:466px;width:55px;height:33px;padding-left:5px">克</div>
<svg style="position:absolute;left:414px;top:509px" width="13" height="13" viewBox="0 0 13 13"><rect x="0" y="0" width="13" height="13" rx="2.5" fill="#0067c0"/><path d="M3.3 6.8 L5.5 8.8 L9.7 4.3" fill="none" stroke="#fff" stroke-width="1.1"/></svg>
<div class="cell" style="left:439px;top:499px;width:75px;height:33px;text-align:right;padding-right:7px">425</div>
<div class="cell" style="left:514px;top:499px;width:43px;height:33px;padding-left:5px">3</div>
<div class="cell" style="left:557px;top:499px;width:97px;height:33px;padding-left:5px">szy</div>
<div class="cell" style="left:654px;top:499px;width:141px;height:33px;padding-left:5px">山茱萸</div>
<div class="cell" style="left:795px;top:499px;width:79px;height:33px;text-align:right;padding-right:7px">$0.44</div>
<div class="cell" style="left:874px;top:499px;width:53px;height:33px;text-align:right;padding-right:7px">3</div>
<div class="cell" style="left:927px;top:499px;width:55px;height:33px;padding-left:5px">克</div>
<svg style="position:absolute;left:414px;top:542px" width="13" height="13" viewBox="0 0 13 13"><rect x="0" y="0" width="13" height="13" rx="2.5" fill="#0067c0"/><path d="M3.3 6.8 L5.5 8.8 L9.7 4.3" fill="none" stroke="#fff" stroke-width="1.1"/></svg>
<div class="cell" style="left:439px;top:532px;width:75px;height:33px;text-align:right;padding-right:7px">2,373</div>
<div class="cell" style="left:514px;top:532px;width:43px;height:33px;padding-left:5px">4</div>
<div class="cell" style="left:557px;top:532px;width:97px;height:33px;padding-left:5px">BHW (...</div>
<div class="cell" style="left:654px;top:532px;width:141px;height:33px;padding-left:5px">保和丸 (EG)</div>
<div class="cell" style="left:795px;top:532px;width:79px;height:33px;text-align:right;padding-right:7px">$0.80</div>
<div class="cell" style="left:874px;top:532px;width:53px;height:33px;text-align:right;padding-right:7px">1</div>
<div class="cell" style="left:927px;top:532px;width:55px;height:33px;padding-left:5px">克</div>
<svg style="position:absolute;left:414px;top:575px" width="13" height="13" viewBox="0 0 13 13"><rect x="0" y="0" width="13" height="13" rx="2.5" fill="#0067c0"/><path d="M3.3 6.8 L5.5 8.8 L9.7 4.3" fill="none" stroke="#fff" stroke-width="1.1"/></svg>
<div class="cell" style="left:439px;top:565px;width:75px;height:33px;text-align:right;padding-right:7px">733</div>
<div class="cell" style="left:514px;top:565px;width:43px;height:33px;padding-left:5px">5</div>
<div class="cell" style="left:557px;top:565px;width:97px;height:33px;padding-left:5px">mdp</div>
<div class="cell" style="left:654px;top:565px;width:141px;height:33px;padding-left:5px">牡丹皮</div>
<div class="cell" style="left:795px;top:565px;width:79px;height:33px;text-align:right;padding-right:7px">$0.40</div>
<div class="cell" style="left:874px;top:565px;width:53px;height:33px;text-align:right;padding-right:7px">1</div>
<div class="cell" style="left:927px;top:565px;width:55px;height:33px;padding-left:5px">克</div>
<svg style="position:absolute;left:414px;top:608px" width="13" height="13" viewBox="0 0 13 13"><rect x="0" y="0" width="13" height="13" rx="2.5" fill="#0067c0"/><path d="M3.3 6.8 L5.5 8.8 L9.7 4.3" fill="none" stroke="#fff" stroke-width="1.1"/></svg>
<div class="cell" style="left:439px;top:598px;width:75px;height:33px;text-align:right;padding-right:7px">995</div>
<div class="cell" style="left:514px;top:598px;width:43px;height:33px;padding-left:5px">6</div>
<div class="cell" style="left:557px;top:598px;width:97px;height:33px;padding-left:5px">zzct</div>
<div class="cell" style="left:654px;top:598px;width:141px;height:33px;padding-left:5px">栀子豉汤</div>
<div class="cell" style="left:795px;top:598px;width:79px;height:33px;text-align:right;padding-right:7px">$0.48</div>
<div class="cell" style="left:874px;top:598px;width:53px;height:33px;text-align:right;padding-right:7px">1</div>
<div class="cell" style="left:927px;top:598px;width:55px;height:33px;padding-left:5px">克</div>
<div style="left:409px;top:812px;width:55px;height:23px;background:#fff;border:1px solid #7a7a7a;border-radius:2px"></div>
<div class="t" style="left:411px;top:814px;font-size:15px;font-weight:bold;line-height:17px">1</div>
<svg style="position:absolute;left:449px;top:821px" width="10" height="6" viewBox="0 0 10 6"><path d="M0.5 0.5 L4.75 4.75 L9 0.5" fill="none" stroke="#555" stroke-width="1"/></svg>
<div class="hd" style="left:470px;top:816px;font-weight:bold">次</div>
<div style="left:496px;top:812px;width:55px;height:23px;background:#fff;border:1px solid #7a7a7a;border-radius:2px"></div>
<div class="t" style="left:498px;top:814px;font-size:15px;font-weight:bold;line-height:17px">31</div>
<svg style="position:absolute;left:536px;top:821px" width="10" height="6" viewBox="0 0 10 6"><path d="M0.5 0.5 L4.75 4.75 L9 0.5" fill="none" stroke="#555" stroke-width="1"/></svg>
<div class="hd" style="left:557px;top:816px">天</div>
<div style="left:604px;top:811px;width:56px;height:23px;background:#f0f0f0;border:1px solid #e0e0e0;border-bottom:1px solid #9a9a9a;border-radius:2px"></div>
<div class="t" style="left:604px;top:814px;width:55px;text-align:right;font-size:15px;font-weight:bold;line-height:16px">8</div>
<div class="hd" style="left:668px;top:815px">克</div>
<div style="left:694px;top:811px;width:291px;height:23px;background:#f0f0f0;border:1px solid #e0e0e0;border-bottom:1px solid #9a9a9a;border-radius:2px"></div>
<div class="t" style="left:695px;top:814px;font-size:15px;font-weight:bold;line-height:16px">$128.60</div>
<div style="left:409px;top:841px;width:142px;height:23px;background:#fff;border:1px solid #7a7a7a;border-radius:2px"></div>
<div class="t" style="left:411px;top:843px;font-size:16px;font-weight:bold;line-height:17px">早/午/晚</div>
<svg style="position:absolute;left:536px;top:850px" width="10" height="6" viewBox="0 0 10 6"><path d="M0.5 0.5 L4.75 4.75 L9 0.5" fill="none" stroke="#555" stroke-width="1"/></svg>
<div class="hd" style="left:559px;top:845px">医嘱:</div>
<div style="left:603px;top:840px;width:382px;height:24px;background:#fff;border:1px solid #7a7a7a;border-radius:2px"></div>
<div class="t" style="left:605px;top:842px;font-size:16px;font-weight:bold;line-height:17px">嘱做适量的运功</div>
<svg style="position:absolute;left:970px;top:850px" width="10" height="6" viewBox="0 0 10 6"><path d="M0.5 0.5 L4.75 4.75 L9 0.5" fill="none" stroke="#555" stroke-width="1"/></svg>
<div style="left:409px;top:870px;width:142px;height:23px;background:#fff;border:1px solid #7a7a7a;border-radius:2px"></div>
<div class="t" style="left:411px;top:872px;font-size:16px;font-weight:bold;line-height:17px">当需要时</div>
<svg style="position:absolute;left:536px;top:879px" width="10" height="6" viewBox="0 0 10 6"><path d="M0.5 0.5 L4.75 4.75 L9 0.5" fill="none" stroke="#555" stroke-width="1"/></svg>
<div style="left:603px;top:869px;width:382px;height:24px;background:#fff;border:1px solid #7a7a7a;border-radius:2px"></div>
<div class="t" style="left:605px;top:871px;font-size:16px;font-weight:bold;line-height:17px">避免风寒</div>
<svg style="position:absolute;left:970px;top:879px" width="10" height="6" viewBox="0 0 10 6"><path d="M0.5 0.5 L4.75 4.75 L9 0.5" fill="none" stroke="#555" stroke-width="1"/></svg>
<div style="left:999px;top:327px;width:225px;height:38px;background:linear-gradient(#fbfbfb,#eeeeee);border-radius:0 3px 3px 0"></div>
<div style="left:1002px;top:332px;width:2px;height:2px;background:#a8a8a8"></div><div style="left:1002px;top:336px;width:2px;height:2px;background:#a8a8a8"></div><div style="left:1002px;top:340px;width:2px;height:2px;background:#a8a8a8"></div><div style="left:1002px;top:344px;width:2px;height:2px;background:#a8a8a8"></div><div style="left:1002px;top:348px;width:2px;height:2px;background:#a8a8a8"></div><div style="left:1002px;top:352px;width:2px;height:2px;background:#a8a8a8"></div><div style="left:1002px;top:356px;width:2px;height:2px;background:#a8a8a8"></div>
<div class="t" style="left:1011px;top:337px;font-size:17px;font-weight:bold;color:#000;line-height:17px">收费</div>
<div style="left:1053px;top:334px;width:1px;height:25px;background:#c8c8c8;box-shadow:1px 0 0 #fff"></div>
<svg style="position:absolute;left:1065px;top:334px" width="20" height="23" viewBox="0 0 20 23"><rect x="0.5" y="0.5" width="4" height="21" rx="1" fill="url(#gGray)" stroke="#b0b0b0"/><path d="M18.5 0.5 L18.5 21.5 L6 11 Z" fill="url(#gGray)" stroke="#b0b0b0" stroke-linejoin="round"/></svg>
<div class="t" style="left:1096px;top:340px;font-size:13px;font-weight:normal;color:#000;line-height:12px">7</div>
<svg style="position:absolute;left:1116px;top:334px" width="20" height="23" viewBox="0 0 20 23"><path d="M0.5 0.5 L0.5 21.5 L13 11 Z" fill="url(#gBlue)" stroke="#3a88cc" stroke-linejoin="round"/><rect x="14.5" y="0.5" width="4" height="21" rx="1" fill="url(#gBlue)" stroke="#3a88cc"/></svg>
<div style="left:1146px;top:334px;width:1px;height:25px;background:#c8c8c8;box-shadow:1px 0 0 #fff"></div>
<svg style="position:absolute;left:1151px;top:330px" width="32" height="32" viewBox="0 0 32 32"><rect x="0.7" y="0.7" width="30.6" height="30.6" rx="4.5" fill="url(#gFlop)" stroke="#2a2a2a" stroke-width="1.4"/><rect x="4.8" y="2.7" width="21.5" height="16.5" fill="url(#gLabel)"/><path d="M9 7.2 h13 M9 10.6 h13 M9 14.4 h13" stroke="#b8bcc8" stroke-width="0.9"/><rect x="4.8" y="21.5" width="21.5" height="9" fill="#1e1e1e"/><rect x="5" y="22.5" width="10.5" height="7.5" fill="#d8d8d8"/><rect x="6.8" y="24" width="1.8" height="4.5" fill="#333"/><rect x="18.3" y="22.5" width="1.2" height="7.5" fill="#888"/></svg>
<svg style="position:absolute;left:1187px;top:330px" width="32" height="32" viewBox="0 0 32 32"><path d="M2 1.5 L13.75 0.5 L13.5 11 L11 8.5 Q6 12 7 17 Q8 22 13.75 26 L10.5 31.5 Q1 26 0.5 17 Q0.5 9 5 5.5 Z" fill="url(#gGreen)" stroke="#2a9a2a" stroke-width="1" stroke-linejoin="round"/><path d="M2 1.5 L13.75 0.5 L13.5 11 L11 8.5 Q6 12 7 17 Q8 22 13.75 26 L10.5 31.5 Q1 26 0.5 17 Q0.5 9 5 5.5 Z" transform="rotate(180 16 16)" fill="url(#gGreen2)" stroke="#2a9a2a" stroke-width="1" stroke-linejoin="round"/></svg>
<div style="left:999px;top:366px;width:600px;height:452px;background:#ababab;border-top:1px solid #a0a0a0;border-left:1px solid #a0a0a0"></div>
<div style="left:1000px;top:367px;width:581px;height:40px;background:#fff"></div>
<div style="left:1000px;top:407px;width:581px;height:1px;background:#a0a0a0"></div>
<div style="left:1047px;top:367px;width:1px;height:40px;background:#e5e5e5"></div>
<div style="left:1133px;top:367px;width:1px;height:40px;background:#e5e5e5"></div>
<div style="left:1288px;top:367px;width:1px;height:40px;background:#e5e5e5"></div>
<div style="left:1377px;top:367px;width:1px;height:40px;background:#e5e5e5"></div>
<div style="left:1425px;top:367px;width:1px;height:40px;background:#e5e5e5"></div>
<div style="left:1480px;top:367px;width:1px;height:40px;background:#e5e5e5"></div>
<div class="hd" style="left:1007px;top:379px;line-height:16px">行号</div>
<div class="hd" style="left:1055px;top:371px;line-height:16px">库存编<br>号</div>
<div class="hd" style="left:1140px;top:379px;line-height:16px">库存名称</div>
<div class="hd" style="left:1297px;top:379px;line-height:16px">单价</div>
<div class="hd" style="left:1385px;top:371px;line-height:16px">数<br>量</div>
<div class="hd" style="left:1433px;top:371px;line-height:16px">单<br>位</div>
<div class="hd" style="left:1488px;top:379px;line-height:16px">金额</div>
<div style="left:1000px;top:408px;width:47px;height:231px;background:#fff"></div>
<div style="left:1047px;top:408px;width:86px;height:231px;background:#e1e1e1"></div>
<div style="left:1133px;top:408px;width:155px;height:231px;background:#e1e1e1"></div>
<div style="left:1288px;top:408px;width:89px;height:231px;background:#fff"></div>
<div style="left:1377px;top:408px;width:48px;height:231px;background:#fff"></div>
<div style="left:1425px;top:408px;width:55px;height:231px;background:#e1e1e1"></div>
<div style="left:1480px;top:408px;width:101px;height:231px;background:#e1e1e1"></div>
<div style="left:999px;top:408px;width:48px;height:33px;background:#0078d7"></div>
<div class="cell" style="left:1000px;top:408px;width:47px;height:33px;padding-left:6px;color:#fff">1</div>
<div class="cell" style="left:1047px;top:408px;width:86px;height:33px;padding-left:6px;color:#000">SYS01</div>
<div class="cell" style="left:1133px;top:408px;width:155px;height:33px;padding-left:6px;color:#000">看诊</div>
<div class="cell" style="left:1288px;top:408px;width:89px;height:33px;text-align:right;padding-right:6px;color:#000">$80.00</div>
<div class="cell" style="left:1377px;top:408px;width:48px;height:33px;text-align:right;padding-right:6px;color:#000">1</div>
<div class="cell" style="left:1480px;top:408px;width:101px;height:33px;text-align:right;padding-right:6px;color:#000">$80.00</div>
<div class="cell" style="left:1000px;top:441px;width:47px;height:33px;padding-left:6px;color:#000">2</div>
<div class="cell" style="left:1047px;top:441px;width:86px;height:33px;padding-left:6px;color:#000">SYS03</div>
<div class="cell" style="left:1133px;top:441px;width:155px;height:33px;padding-left:6px;color:#000">针灸</div>
<div class="cell" style="left:1288px;top:441px;width:89px;height:33px;text-align:right;padding-right:6px;color:#000">$0.00</div>
<div class="cell" style="left:1377px;top:441px;width:48px;height:33px;text-align:right;padding-right:6px;color:#000">1</div>
<div class="cell" style="left:1480px;top:441px;width:101px;height:33px;text-align:right;padding-right:6px;color:#000">$0.00</div>
<div class="cell" style="left:1000px;top:474px;width:47px;height:33px;padding-left:6px;color:#000">3</div>
<div class="cell" style="left:1047px;top:474px;width:86px;height:33px;padding-left:6px;color:#000">SYS04</div>
<div class="cell" style="left:1133px;top:474px;width:155px;height:33px;padding-left:6px;color:#000">拔罐</div>
<div class="cell" style="left:1288px;top:474px;width:89px;height:33px;text-align:right;padding-right:6px;color:#000">$0.00</div>
<div class="cell" style="left:1377px;top:474px;width:48px;height:33px;text-align:right;padding-right:6px;color:#000">1</div>
<div class="cell" style="left:1480px;top:474px;width:101px;height:33px;text-align:right;padding-right:6px;color:#000">$0.00</div>
<div class="cell" style="left:1000px;top:507px;width:47px;height:33px;padding-left:6px;color:#000">4</div>
<div class="cell" style="left:1047px;top:507px;width:86px;height:33px;padding-left:6px;color:#000">SYS90</div>
<div class="cell" style="left:1133px;top:507px;width:155px;height:33px;padding-left:6px;color:#000">Others</div>
<div class="cell" style="left:1288px;top:507px;width:89px;height:33px;text-align:right;padding-right:6px;color:#000">$0.00</div>
<div class="cell" style="left:1377px;top:507px;width:48px;height:33px;text-align:right;padding-right:6px;color:#000">1</div>
<div class="cell" style="left:1480px;top:507px;width:101px;height:33px;text-align:right;padding-right:6px;color:#000">$0.00</div>
<div class="cell" style="left:1000px;top:540px;width:47px;height:33px;padding-left:6px;color:#000">5</div>
<div class="cell" style="left:1047px;top:540px;width:86px;height:33px;padding-left:6px;color:#000">SYS91</div>
<div class="cell" style="left:1133px;top:540px;width:155px;height:33px;padding-left:6px;color:#000">Meridian Ther...</div>
<div class="cell" style="left:1288px;top:540px;width:89px;height:33px;text-align:right;padding-right:6px;color:#000">$0.00</div>
<div class="cell" style="left:1377px;top:540px;width:48px;height:33px;text-align:right;padding-right:6px;color:#000">1</div>
<div class="cell" style="left:1480px;top:540px;width:101px;height:33px;text-align:right;padding-right:6px;color:#000">$0.00</div>
<div class="cell" style="left:1000px;top:573px;width:47px;height:33px;padding-left:6px;color:#000">26</div>
<div class="cell" style="left:1047px;top:573px;width:86px;height:33px;padding-left:6px;color:#000">SYS10</div>
<div class="cell" style="left:1133px;top:573px;width:155px;height:33px;padding-left:6px;color:#000">药粉</div>
<div class="cell" style="left:1288px;top:573px;width:89px;height:33px;text-align:right;padding-right:6px;color:#000">$308.70</div>
<div class="cell" style="left:1377px;top:573px;width:48px;height:33px;text-align:right;padding-right:6px;color:#000">1</div>
<div class="cell" style="left:1480px;top:573px;width:101px;height:33px;text-align:right;padding-right:6px;color:#000">$308.70</div>
<div class="cell" style="left:1000px;top:606px;width:47px;height:33px;padding-left:6px;color:#000">28</div>
<div class="cell" style="left:1047px;top:606px;width:86px;height:33px;padding-left:6px;color:#000">SYS12</div>
<div class="cell" style="left:1133px;top:606px;width:155px;height:33px;padding-left:6px;color:#000">成药2</div>
<div class="cell" style="left:1288px;top:606px;width:89px;height:33px;text-align:right;padding-right:6px;color:#000">$120.00</div>
<div class="cell" style="left:1377px;top:606px;width:48px;height:33px;text-align:right;padding-right:6px;color:#000">1</div>
<div class="cell" style="left:1480px;top:606px;width:101px;height:33px;text-align:right;padding-right:6px;color:#000">$120.00</div>
<div class="hd" style="left:1290px;top:827px;width:110px;text-align:right">金额:</div>
<div style="left:1411px;top:823px;width:168px;height:22px;background:#e3e3e3;border:1px solid #fafafa;border-bottom:1px solid #8a8a8a;border-radius:2px"></div>
<div class="t" style="left:1411px;top:826px;width:167px;text-align:right;font-size:15px;font-weight:bold;line-height:16px">$508.70</div>
<div class="hd" style="left:1290px;top:851px;width:110px;text-align:right">消费税:</div>
<div style="left:1411px;top:847px;width:168px;height:22px;background:#e3e3e3;border:1px solid #fafafa;border-bottom:1px solid #8a8a8a;border-radius:2px"></div>
<div class="t" style="left:1411px;top:850px;width:167px;text-align:right;font-size:15px;font-weight:bold;line-height:16px">$35.61</div>
<div class="hd" style="left:1290px;top:874px;width:110px;text-align:right">总金额:</div>
<div style="left:1411px;top:870px;width:168px;height:22px;background:#e3e3e3;border:1px solid #fafafa;border-bottom:1px solid #8a8a8a;border-radius:2px"></div>
<div class="t" style="left:1411px;top:873px;width:167px;text-align:right;font-size:15px;font-weight:bold;line-height:16px">$544.31</div>
</body></html>
